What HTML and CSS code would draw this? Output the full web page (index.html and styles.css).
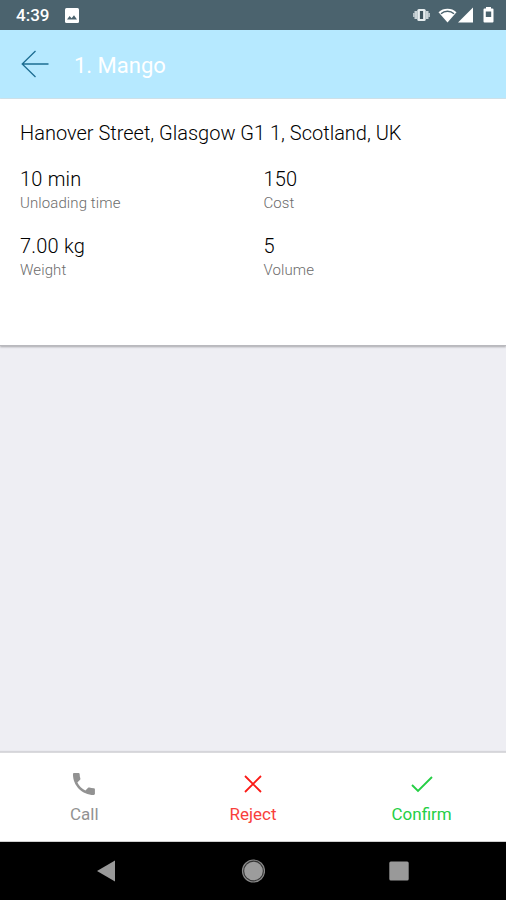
FILE: index.html
```html
<!DOCTYPE html>
<html lang="en">

<head>
    <meta charset="UTF-8">
    <meta name="viewport" content="width=device-width, initial-scale=1.0">
    <title>1. Mango</title>
    <link rel="stylesheet" href="styles.css">
</head>

<body>
    <div class="status-bar">
        <span class="time">4:39</span>
        <svg class="picture" width="14" height="15" viewBox="0 0 14 15">
            <rect width="14" height="15" rx="1.5" fill="#fff" />
            <path d="M2 11.5l2.6-3.4 2 2.2 2.4-3 3 4.2z" fill="#4b636e" />
        </svg>
        <svg class="system" width="84" height="20" viewBox="0 0 84 20">
            <path d="M3.800 6v8M15.200 6v8" stroke="#c9d3d7" stroke-width="2.600" />
            <path d="M1.900 8v4M17.100 8v4" stroke="#c9d3d7" stroke-width="1.500" />
            <rect x="5.300" y="4" width="8.400" height="12" rx="1.500" fill="#e6edef" />
            <rect x="7.900" y="6" width="3.200" height="8" fill="#3f555f" />
            <path d="M26.500 7.200a13.500 13.500 0 0 1 18 0L35.500 17.500z" fill="#fff" />
            <path d="M29 8.800a9.500 9.500 0 0 1 13 0" fill="none" stroke="#4b636e" stroke-width="1.500" />
            <path d="M46 17.500h15V2.500z" fill="#fff" />
            <path d="M72 3.500h2V2h5v1.500h1.500q1 0 1 1v12q0 1-1 1h-8q-1 0-1-1v-12q0-1 1-1z" fill="#fff" />
            <path d="M73.800 6.500h5.400v5.500h-5.400z" fill="#4b636e" />
        </svg>
    </div>

    <header class="header">
        <svg class="back" width="28" height="28" viewBox="0 0 28 28">
            <path d="M14.500 1L1.200 14l13.300 13M1.200 14H27.500" />
        </svg>
        <h1>1. Mango</h1>
    </header>

    <main class="card">
        <p class="address">Hanover Street, Glasgow G1 1, Scotland, UK</p>
        <div class="details">
            <div class="item">
                <p class="value">10 min</p>
                <p class="name">Unloading time</p>
            </div>
            <div class="item">
                <p class="value">150</p>
                <p class="name">Cost</p>
            </div>
            <div class="item">
                <p class="value">7.00 kg</p>
                <p class="name">Weight</p>
            </div>
            <div class="item">
                <p class="value">5</p>
                <p class="name">Volume</p>
            </div>
        </div>
    </main>

    <div class="actions">
        <button type="button" class="call">
            <svg width="30" height="30" viewBox="0 0 30 30">
                <path transform="translate(.3 .3) scale(1.22)" fill="currentColor" d="M6.620 10.790c1.440 2.830 3.760 5.140 6.590 6.590l2.200-2.200c.27-.27.67-.36 1.020-.24 1.120.37 2.330.57 3.570.57.55 0 1 .45 1 1V20c0 .55-.45 1-1 1-9.390 0-17-7.610-17-17 0-.55.45-1 1-1h3.500c.55 0 1 .45 1 1 0 1.250.2 2.450.57 3.570.11.35.03.74-.25 1.020l-2.200 2.200z" />
            </svg>
            <span>Call</span>
        </button>
        <button type="button" class="reject">
            <svg width="30" height="30" viewBox="0 0 30 30">
                <path d="M7 7l16 16M23 7L7 23" fill="none" stroke="#fb1a16" stroke-width="1.800" />
            </svg>
            <span>Reject</span>
        </button>
        <button type="button" class="confirm">
            <svg width="30" height="30" viewBox="0 0 30 30">
                <path d="M5 16l6 6L25 8" fill="none" stroke="currentColor" stroke-width="1.900" />
            </svg>
            <span>Confirm</span>
        </button>
    </div>

    <div class="nav-bar">
        <svg width="24" height="24" viewBox="0 0 24 24">
            <path d="M2 12L20 1.500v21z" fill="#999" />
        </svg>
        <svg width="24" height="24" viewBox="0 0 24 24">
            <circle cx="12.500" cy="12" r="11" fill="#333" stroke="#888" stroke-width="1.200" />
            <circle cx="12.500" cy="12" r="9.300" fill="#9c9c9c" />
        </svg>
        <svg width="24" height="24" viewBox="0 0 24 24">
            <rect x="2.300" y="2.500" width="19.400" height="19" rx="1.500" fill="#999" />
        </svg>
    </div>
</body>

</html>
```

FILE: styles.css
```css
* {
    box-sizing: border-box;
}

body {
    margin: 0;
    height: 900px;
    display: flex;
    flex-direction: column;
    font-family: Roboto, "Liberation Sans", sans-serif;
    background-color: #eeeef3;
}

h1,
p {
    margin: 0;
}

.status-bar {
    height: 30px;
    padding: 0 10px 0 16px;
    display: flex;
    align-items: center;
    background-color: #4b636e;
    color: #fff;
}

.time {
    font-size: 17px;
    font-weight: 500;
    width: 49px;
}

.system {
    margin-left: auto;
    margin-bottom: 1px;
}

.header {
    height: 69px;
    padding-left: 21px;
    display: flex;
    align-items: center;
    background-color: #b6e9ff;
    border-bottom: 1px solid #d3e5ed;
}

.back path {
    fill: none;
    stroke: #1d6d92;
    stroke-width: 1.3;
}

.header h1 {
    margin: 3px 0 0 25px;
    font-size: 22px;
    font-weight: 400;
    color: #fff;
}

.card {
    height: 247px;
    padding: 22px 20px 0;
    background-color: #fff;
    border-bottom: 1px solid #b9b9be;
    box-shadow: 0 1px 2px rgba(0, 0, 0, 0.3);
}

.address,
.value {
    font-size: 20px;
    font-weight: 300;
    line-height: 24px;
    color: #000;
}

.value {
    letter-spacing: 0.2px;
}

.details {
    margin-top: 22px;
    display: grid;
    grid-template-columns: 243.500px 1fr;
    row-gap: 22px;
}

.name {
    margin-top: 3px;
    font-size: 15px;
    font-weight: 300;
    line-height: 18px;
    letter-spacing: 0.1px;
    color: #6c6c6c;
}

.actions {
    margin-top: auto;
    height: 90px;
    display: grid;
    grid-template-columns: repeat(3, 1fr);
    background-color: #fff;
    border-top: 1px solid #dadadd;
    border-bottom: 1px solid #cfcfcf;
    box-shadow: 0 -1px 1px rgba(0, 0, 0, 0.1);
}

.actions button {
    display: flex;
    flex-direction: column;
    align-items: center;
    padding: 16px 0 0;
    border: none;
    background: none;
    font-family: inherit;
    font-size: 17px;
    line-height: 20px;
    cursor: pointer;
}

.actions span {
    margin-top: 5px;
}

.actions .call {
    color: #929292;
}

.actions .reject {
    color: #f83f3b;
}

.actions .confirm {
    color: #25cf45;
}

.nav-bar {
    height: 58px;
    padding: 0 95px;
    display: flex;
    align-items: center;
    justify-content: space-between;
    background-color: #000;
}
```
